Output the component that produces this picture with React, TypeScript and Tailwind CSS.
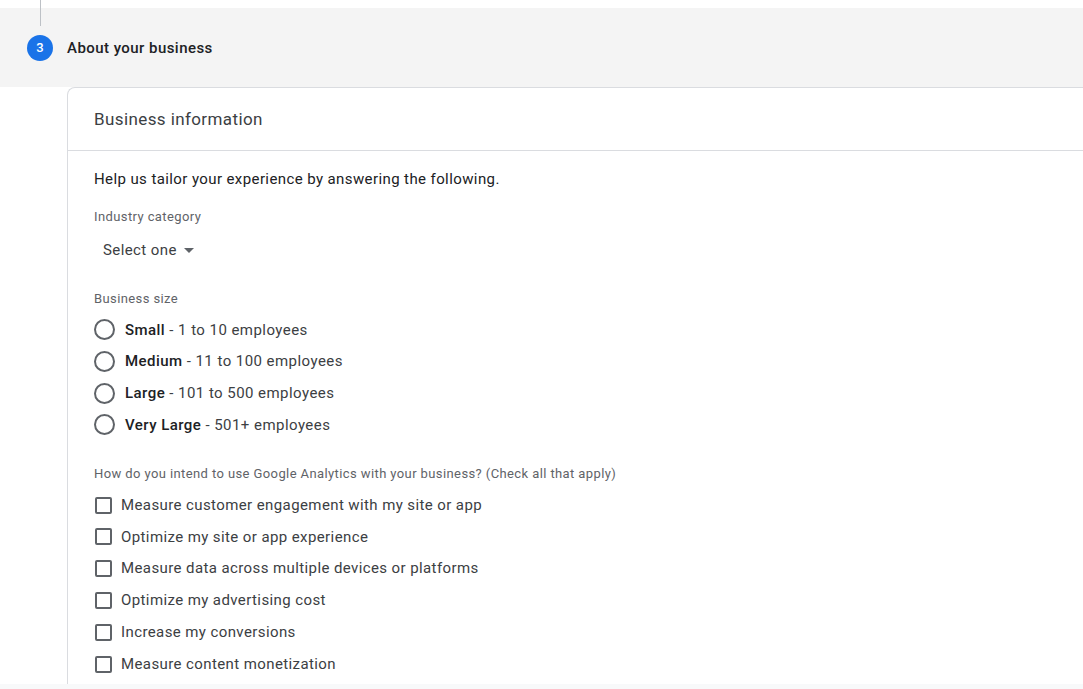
import React from "react";

const sizes = [
  { name: "Small", detail: "1 to 10 employees" },
  { name: "Medium", detail: "11 to 100 employees" },
  { name: "Large", detail: "101 to 500 employees" },
  { name: "Very Large", detail: "501+ employees" },
];

const uses = [
  "Measure customer engagement with my site or app",
  "Optimize my site or app experience",
  "Measure data across multiple devices or platforms",
  "Optimize my advertising cost",
  "Increase my conversions",
  "Measure content monetization",
];

export default function App() {
  return (
    <div
      className="relative w-full h-[689px] overflow-hidden bg-white flex flex-col"
      style={{ fontFamily: "Roboto, 'Noto Sans', Arial, sans-serif" }}
    >
      {/* Stepper connector */}
      <div aria-hidden className="absolute left-[40px] top-0 w-px h-[26px] bg-[#bdc1c6]" />

      <div className="h-[8px] shrink-0 bg-white" />

      {/* Step header */}
      <div className="h-[79px] shrink-0 bg-[#f4f4f4] flex items-center pl-[27px] gap-[14px]">
        <div className="relative w-[26px] h-[26px] rounded-full bg-[#1a73e8] flex items-center justify-center text-white text-[13px] font-medium">
          3
        </div>
        <span className="pt-px text-[15px] font-medium text-[#202124] tracking-[0.45px]">About your business</span>
      </div>

      {/* Card */}
      <div className="flex-1 min-h-0 pl-[67px]">
        <div className="h-full border-l border-t border-[#dadce0] rounded-tl-lg overflow-hidden">
          <div className="h-[63px] pt-[2px] border-b border-[#dadce0] flex items-center px-[26px] text-[17px] text-[#3c4043] tracking-[0.4px]">
            Business information
          </div>

          <div className="px-[26px] pt-[18px]">
            <p className="text-[15px] leading-[20px] text-[#202124] tracking-[0.4px]">
              Help us tailor your experience by answering the following.
            </p>

            <p className="mt-[20px] text-[13px] leading-[16px] text-[#5f6368] tracking-[0.4px]">Industry category</p>

            <div className="mt-[13px] h-[24px] pl-[9px] flex items-center gap-[7px] text-[15px] text-[#3c4043] tracking-[0.4px]">
              <span>Select one</span>
              <svg width="10" height="5" viewBox="0 0 10 5" className="mt-[1px]">
                <path d="M0 0 L10 0 L5 5 Z" fill="#5f6368" />
              </svg>
            </div>

            <p className="mt-[29px] text-[13px] leading-[16px] text-[#5f6368] tracking-[0.4px]">Business size</p>

            <div className="mt-[7px] flex flex-col">
              {sizes.map((s) => (
                <label key={s.name} className="h-[31.7px] flex items-center gap-[10px] text-[15px] text-[#3c4043] tracking-[0.45px]">
                  <span className="w-[21px] h-[21px] rounded-full border-2 border-[#5f6368] shrink-0" />
                  <span>
                    <span className="font-medium text-[#202124]">{s.name}</span> - {s.detail}
                  </span>
                </label>
              ))}
            </div>

            <p className="mt-[25px] text-[13px] leading-[16px] text-[#5f6368] tracking-[0.4px]">
              How do you intend to use Google Analytics with your business? (Check all that apply)
            </p>

            <div className="mt-[7.5px] flex flex-col">
              {uses.map((u) => (
                <label key={u} className="h-[31.8px] flex items-center gap-[9px] text-[15px] text-[#3c4043] tracking-[0.4px]">
                  <span className="ml-px w-[17px] h-[17px] rounded-[2px] border-2 border-[#5f6368] shrink-0" />
                  <span>{u}</span>
                </label>
              ))}
            </div>
          </div>
        </div>
      </div>

      <div className="h-[5px] shrink-0 bg-[#f8f9fa]" />
    </div>
  );
}
